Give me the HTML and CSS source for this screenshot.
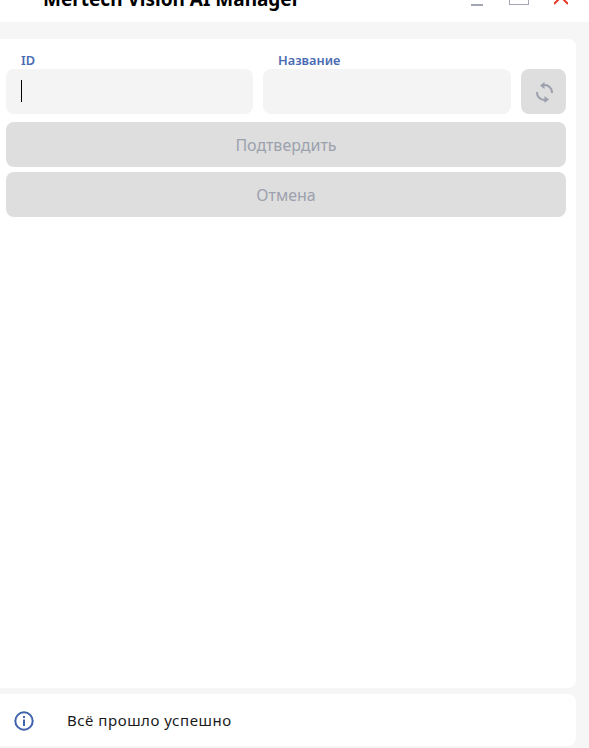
FILE: index.html
```html
<!DOCTYPE html>
<html lang="ru">
<head>
    <meta charset="UTF-8">
    <meta name="viewport" content="width=device-width, initial-scale=1.0">
    <title>Mertech Vision AI Manager</title>
    <link rel="stylesheet" href="styles.css">
</head>
<body>
    <header class="titlebar">
        <h1 class="app-title">Mertech Vision AI Manager</h1>
        <div class="window-controls">
            <span class="win-min"></span>
            <span class="win-max"></span>
            <svg class="win-close" width="14" height="6" viewBox="0 0 14 6">
                <path d="M0 4 L7 -3 L14 4 M0 -10 L7 -3 L14 -10" stroke="#e8392b" stroke-width="2" fill="none"/>
            </svg>
        </div>
    </header>

    <main class="panel">
        <form class="id-form">
            <div class="field-row">
                <div class="field field-id">
                    <label class="field-label" for="itemId">ID</label>
                    <div class="fake-input"><span class="caret"></span></div>
                </div>
                <div class="field">
                    <label class="field-label" for="itemName">Название</label>
                    <div class="fake-input"></div>
                </div>
                <button type="button" class="refresh-button" aria-label="Обновить">
                    <svg width="19" height="23" viewBox="0 0 19 23" fill="none" stroke="#9ca1ad" stroke-width="2">
                        <path d="M10 5 A7.5 7.5 0 0 1 18 13"/>
                        <path d="M11 20 A7.5 7.5 0 0 1 3 12"/>
                        <path d="M6 5.5 L10.5 2 L10.5 9 Z" fill="#9ca1ad" stroke="none"/>
                        <path d="M15 19.5 L10.5 16 L10.5 23 Z" fill="#9ca1ad" stroke="none"/>
                    </svg>
                </button>
            </div>
            <button type="button" class="wide-button">Подтвердить</button>
            <button type="button" class="wide-button">Отмена</button>
        </form>
    </main>

    <footer class="status-panel">
        <svg class="status-icon" width="20" height="20" viewBox="0 0 20 20" fill="none">
            <circle cx="10" cy="10" r="8.7" stroke="#3f62ac" stroke-width="2"/>
            <rect x="9" y="8.5" width="2" height="6.5" fill="#3f62ac"/>
            <rect x="9" y="5" width="2" height="2" fill="#3f62ac"/>
        </svg>
        <span class="status-text">Всё прошло успешно</span>
    </footer>
</body>
</html>
```

FILE: styles.css
```css
html, body {
    height: 100%;
}
body {
    margin: 0;
    background-color: #f6f6f6;
    font-family: "Noto Sans", "Open Sans", sans-serif;
    overflow: hidden;
}
.titlebar {
    height: 22px;
    background-color: #fff;
    display: flex;
    justify-content: space-between;
    align-items: flex-end;
    overflow: hidden;
    padding: 0 21px 0 43px;
}
.app-title {
    margin: 0 0 9px;
    font-size: 19px;
    line-height: 27px;
    font-weight: 700;
    color: #000;
    white-space: nowrap;
}
.window-controls {
    display: flex;
    align-items: flex-start;
    height: 22px;
}
.win-min {
    width: 12px;
    height: 2px;
    margin-top: 4px;
    background-color: #a2a6b3;
}
.win-max {
    width: 18px;
    height: 4px;
    margin: 0 25px 0 26px;
    border: 1px solid #a2a6b3;
    border-top: none;
}
.win-close {
    display: block;
}
.panel {
    height: 649px;
    margin: 17px 13px 0 0;
    box-sizing: border-box;
    background-color: #fff;
    border-radius: 0 8px 8px 0;
    padding: 11px 10px 0 6px;
}
.id-form {
    display: flex;
    flex-direction: column;
    gap: 5px;
}
.field-row {
    display: flex;
    align-items: flex-end;
    gap: 10px;
    margin-bottom: 3px;
}
.field {
    flex: 1;
}
.field-id {
    flex: 0 0 247px;
}
.field-label {
    display: block;
    padding: 2px 0 0 15px;
    font-size: 12.8px;
    line-height: 17px;
    font-weight: 600;
    color: #4a6cb3;
}
.fake-input {
    height: 45px;
    box-sizing: border-box;
    background-color: #f5f4f5;
    border-radius: 8px;
    padding: 11px 0 0 15px;
}
.caret {
    display: block;
    width: 1px;
    height: 22px;
    background-color: #000;
}
.refresh-button {
    width: 45px;
    height: 45px;
    padding: 0;
    border: none;
    border-radius: 8px;
    background-color: #dedede;
    display: flex;
    align-items: center;
    justify-content: center;
}
.wide-button {
    height: 45px;
    border: none;
    border-radius: 8px;
    background-color: #dedede;
    color: #9ca1ad;
    font-family: inherit;
    font-size: 16px;
}
.status-panel {
    height: 52px;
    margin: 6px 13px 0 0;
    box-sizing: border-box;
    background-color: #fff;
    border-radius: 0 8px 8px 0;
    display: flex;
    align-items: center;
    padding-left: 14px;
}
.status-icon {
    margin-top: 2px;
}
.status-text {
    margin-left: 33px;
    font-size: 15px;
    letter-spacing: 0.55px;
    color: #1a1a1a;
}
```
